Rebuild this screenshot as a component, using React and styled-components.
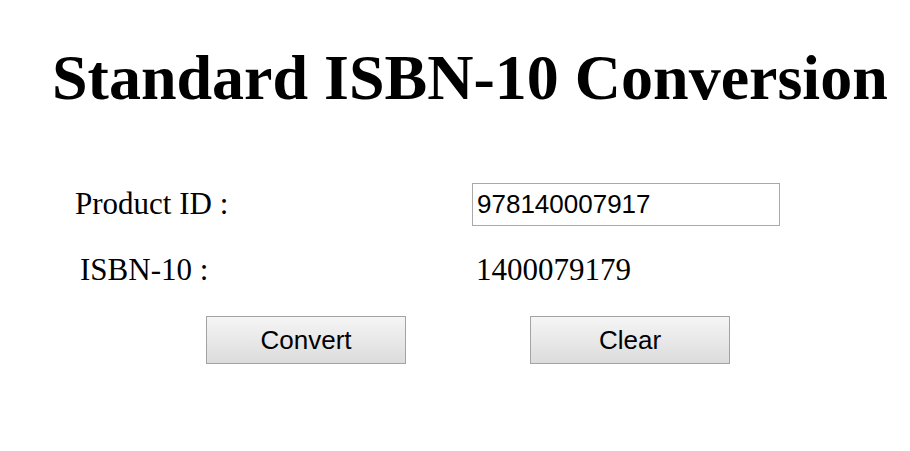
import React, { useState } from 'react';
import styled, { createGlobalStyle } from 'styled-components';

const GlobalStyle = createGlobalStyle`
  html, body {
    margin: 0;
    padding: 0;
    background: #ffffff;
  }
  body {
    font-family: 'Liberation Serif', 'Times New Roman', serif;
    color: #000;
  }
`;

const Page = styled.div`
  width: 910px;
  height: 451px;
  padding-top: 41px;
  box-sizing: border-box;
`;

const Title = styled.h1`
  margin: 0 0 0 52px;
  font-family: 'Liberation Serif', 'Times New Roman', serif;
  font-size: 64px;
  font-weight: bold;
  line-height: 74px;
  white-space: nowrap;
`;

const Form = styled.div`
  display: flex;
  flex-direction: column;
  margin-top: 68px;
`;

const Row = styled.div`
  display: grid;
  grid-template-columns: 472px 1fr;
  align-items: center;
  height: ${(p) => p.$height}px;
  margin-top: ${(p) => p.$gap || 0}px;
`;

const Label = styled.label`
  padding-left: ${(p) => p.$indent}px;
  font-size: 31px;
  line-height: 34.5px;
  white-space: nowrap;
`;

const Input = styled.input`
  box-sizing: border-box;
  width: 308px;
  height: 43px;
  padding: 0 4px;
  border: 1px solid #a9a9a9;
  font-family: 'Liberation Sans', Arial, sans-serif;
  font-size: 26px;
  color: #000;
  outline: none;
`;

const Value = styled.span`
  padding-left: 4px;
  font-size: 31px;
  line-height: 34.5px;
`;

const Buttons = styled.div`
  display: flex;
  gap: 124px;
  margin-top: 29px;
  padding-left: 206px;
`;

const Button = styled.button`
  box-sizing: border-box;
  width: 200px;
  height: 48px;
  padding: 0;
  border: 1px solid #a3a3a3;
  border-radius: 0;
  background: linear-gradient(to bottom, #f5f5f5, #dcdcdc);
  font-family: 'Liberation Sans', Arial, sans-serif;
  font-size: 26px;
  color: #000;
  cursor: pointer;
`;

function toIsbn10(id) {
  const digits = id.replace(/\D/g, '');
  if (digits.length < 12) return '';
  const core = digits.slice(3, 12);
  let sum = 0;
  for (let i = 0; i < 9; i++) sum += (10 - i) * Number(core[i]);
  const check = (11 - (sum % 11)) % 11;
  return core + (check === 10 ? 'X' : String(check));
}

export default function App() {
  const [productId, setProductId] = useState('978140007917');
  const [isbn, setIsbn] = useState('1400079179');

  return (
    <Page>
      <GlobalStyle />
      <Title>Standard ISBN-10 Conversion</Title>
      <Form>
        <Row $height={43}>
          <Label $indent={75}>Product ID :</Label>
          <Input value={productId} onChange={(e) => setProductId(e.target.value)} />
        </Row>
        <Row $height={34.5} $gap={26.6}>
          <Label $indent={80}>ISBN-10 :</Label>
          <Value>{isbn}</Value>
        </Row>
      </Form>
      <Buttons>
        <Button onClick={() => setIsbn(toIsbn10(productId))}>Convert</Button>
        <Button onClick={() => { setProductId(''); setIsbn(''); }}>Clear</Button>
      </Buttons>
    </Page>
  );
}
